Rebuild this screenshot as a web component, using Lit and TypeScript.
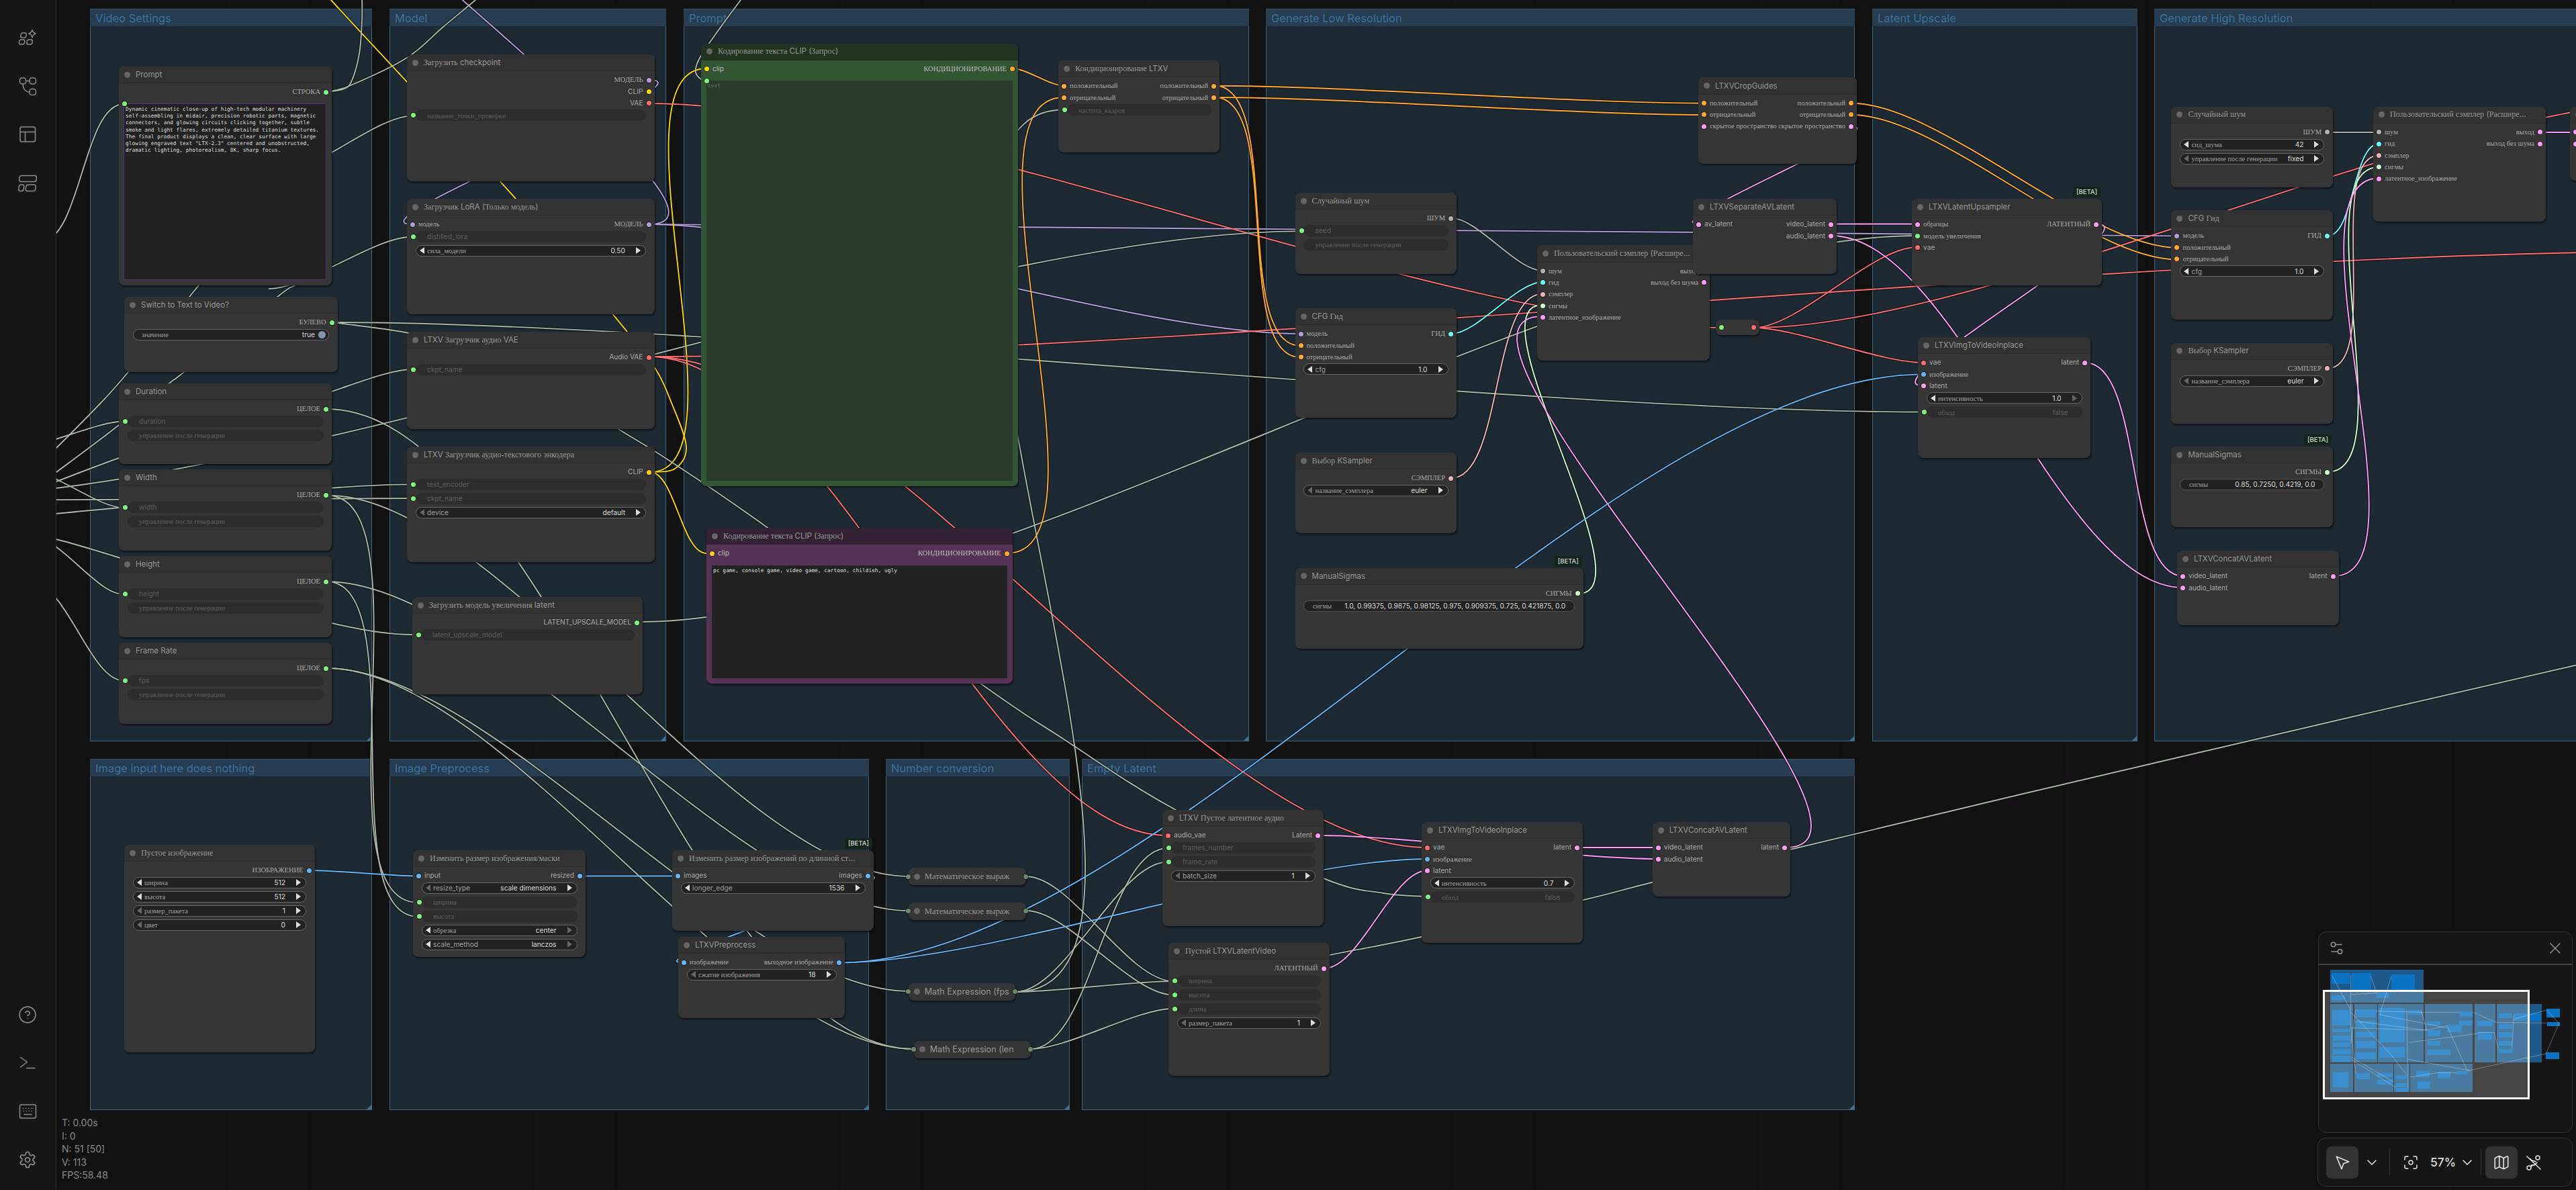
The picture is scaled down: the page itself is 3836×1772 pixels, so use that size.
import { LitElement, html, css, svg } from "lit";
import { customElement } from "lit/decorators.js";

const M = "#b39ddb", Y = "#ffd500", R = "#ff6e6e", O = "#ffa931", L = "#ff9cf9", I = "#64b5f6",
  P = "#7cf77c", N = "#b0b0b0", C = "#66ffff", S = "#ecb4b4", SI = "#cdffcd", G = "#a9b7a7";

type Row = any;
const s = (l?: string, lc?: string, r?: string, rc?: string): Row => ({ k: "s", l, lc, r, rc });
const w = (name: string, val: string, o: any = {}): Row => ({ k: "w", name, val, ...o });
const d = (name: string, port = true, val = ""): Row => ({ k: "d", name, val, port });
const m = (name: string, val: string): Row => ({ k: "m", name, val });

const AFTER = "управление после генерации";

const groups = [
  ["Video Settings", 134, 13, 554, 1104], ["Model", 580, 13, 992, 1104], ["Prompt", 1018, 13, 1860, 1104],
  ["Generate Low Resolution", 1885, 13, 2762, 1104], ["Latent Upscale", 2788, 13, 3183, 1104],
  ["Generate High Resolution", 3208, 13, 3900, 1104],
  ["Image input here does nothing", 134, 1130, 554, 1653], ["Image Preprocess", 580, 1130, 1294, 1653],
  ["Number conversion", 1319, 1130, 1593, 1653], ["Empty Latent", 1611, 1130, 2762, 1653],
] as [string, number, number, number, number][];

const nodes: any[] = [
  { b: [177, 99, 494, 425], t: "Prompt", r: [s("", "", "СТРОКА", P), { k: "ta", big: true, port: P, text: 'Dynamic cinematic close-up of high-tech modular machinery\nself-assembling in midair, precision robotic parts, magnetic\nconnectors, and glowing circuits clicking together, subtle\nsmoke and light flares, extremely detailed titanium textures.\nThe final product displays a clean, clear surface with large\nglowing engraved text "LTX-2.3" centered and unobstructed,\ndramatic lighting, photorealism, 8K, sharp focus.' }] },
  { b: [185, 442, 502.5, 554], t: "Switch to Text to Video?", r: [s("", "", "БУЛЕВО", P), { k: "tg", name: "значение", val: "true" }] },
  { b: [177, 571, 494, 691], t: "Duration", r: [s("", "", "ЦЕЛОЕ", P), d("duration"), d(AFTER, false)] },
  { b: [177, 699, 494, 820], t: "Width", r: [s("", "", "ЦЕЛОЕ", P), d("width"), d(AFTER, false)] },
  { b: [177, 828, 494, 949], t: "Height", r: [s("", "", "ЦЕЛОЕ", P), d("height"), d(AFTER, false)] },
  { b: [177, 957, 494, 1077.5], t: "Frame Rate", r: [s("", "", "ЦЕЛОЕ", P), d("fps"), d(AFTER, false)] },

  { b: [606, 81, 974.5, 270], t: "Загрузить checkpoint", r: [s("", "", "МОДЕЛЬ", M), s("", "", "CLIP", Y), s("", "", "VAE", R), d("название_точки_проверки")] },
  { b: [606, 296, 974.5, 468], t: "Загрузчик LoRA (Только модель)", r: [s("модель", M, "МОДЕЛЬ", M), d("distilled_lora"), w("сила_модели", "0.50", { dl: 0 })] },
  { b: [606, 494, 974.5, 639], t: "LTXV Загрузчик аудио VAE", r: [s("", "", "Audio VAE", R), d("ckpt_name")] },
  { b: [606, 665, 974.5, 837], t: "LTXV Загрузчик аудио-текстового энкодера", r: [s("", "", "CLIP", Y), d("text_encoder"), d("ckpt_name"), w("device", "default", { dl: 1 })] },
  { b: [614, 889, 957, 1034], t: "Загрузить модель увеличения latent", r: [s("", "", "LATENT_UPSCALE_MODEL", P), d("latent_upscale_model")] },

  { b: [1044, 64.5, 1516, 724], t: "Кодирование текста CLIP (Запрос)", v: "green", r: [s("clip", Y, "КОНДИЦИОНИРОВАНИЕ", O), { k: "ta", port: P, ph: "text", text: "" }] },
  { b: [1052, 786, 1507.5, 1017.5], t: "Кодирование текста CLIP (Запрос)", v: "purple", r: [s("clip", Y, "КОНДИЦИОНИРОВАНИЕ", O), { k: "ta", text: "pc game, console game, video game, cartoon, childish, ugly" }] },
  { b: [1576, 90, 1816, 226.7], t: "Кондиционирование LTXV", r: [s("положительный", O, "положительный", O), s("отрицательный", O, "отрицательный", O), d("частота_кадров")] },

  { b: [1928.5, 287, 2169, 407.5], t: "Случайный шум", r: [s("", "", "ШУМ", N), d("seed"), d(AFTER, false)] },
  { b: [1928.5, 459, 2169, 622], t: "CFG Гид", r: [s("модель", M, "ГИД", C), s("положительный", O), s("отрицательный", O), w("cfg", "1.0")] },
  { b: [1928.5, 674, 2169, 794], t: "Выбор KSampler", r: [s("", "", "СЭМПЛЕР", S), w("название_сэмплера", "euler", { dl: 1 })] },
  { b: [1928.5, 845.7, 2357.7, 966], t: "ManualSigmas", badge: 1, r: [s("", "", "СИГМЫ", SI), m("сигмы", "1.0, 0.99375, 0.9875, 0.98125, 0.975, 0.909375, 0.725, 0.421875, 0.0")] },
  { b: [2529, 115.4, 2765, 244], t: "LTXVCropGuides", r: [s("положительный", O, "положительный", O), s("отрицательный", O, "отрицательный", O), s("скрытое пространство", L, "скрытое пространство", L)] },
  { b: [2289, 365.4, 2546, 537], t: "Пользовательский сэмплер (Расшире...", r: [s("шум", N, "выход", L), s("гид", C, "выход без шума", L), s("сэмплер", S), s("сигмы", SI), s("латентное_изображение", L)] },
  { b: [2521, 296, 2735, 408], t: "LTXVSeparateAVLatent", r: [s("av_latent", L, "video_latent", L), s("", "", "audio_latent", L)] },

  { b: [2847, 296, 3130, 424.7], t: "LTXVLatentUpsampler", badge: 1, r: [s("образцы", L, "ЛАТЕНТНЫЙ", L), s("модель увеличения", P), s("vae", R)] },
  { b: [2856, 502, 3113, 682.4], t: "LTXVImgToVideoInplace", r: [s("vae", R, "latent", L), s("изображение", I), s("latent", L), w("интенсивность", "1.0", { dr: 1 }), d("обход", true, "false")] },
  { b: [3233.4, 158.8, 3474, 278.7], t: "Случайный шум", r: [s("", "", "ШУМ", N), w("сид_шума", "42"), w(AFTER, "fixed", { dl: 1 })] },
  { b: [3233.4, 313, 3474, 475.8], t: "CFG Гид", r: [s("модель", M, "ГИД", C), s("положительный", O), s("отрицательный", O), w("cfg", "1.0")] },
  { b: [3233.4, 510.8, 3474, 630.7], t: "Выбор KSampler", r: [s("", "", "СЭМПЛЕР", S), w("название_сэмплера", "euler", { dl: 1 })] },
  { b: [3233.4, 665, 3474, 785], t: "ManualSigmas", badge: 1, r: [s("", "", "СИГМЫ", SI), m("сигмы", "0.85, 0.7250, 0.4219, 0.0")] },
  { b: [3242, 820, 3482.5, 931], t: "LTXVConcatAVLatent", r: [s("video_latent", L, "latent", L), s("audio_latent", L)] },
  { b: [3534, 158.8, 3791, 330], t: "Пользовательский сэмплер (Расшире...", r: [s("шум", N, "выход", L), s("гид", C, "выход без шума", L), s("сэмплер", S), s("сигмы", SI), s("латентное_изображение", L)] },
  { b: [3827, 158.8, 4100, 269], t: "", r: [s("", L), s("", L)] },

  { b: [185, 1258, 468.5, 1567], t: "Пустое изображение", r: [s("", "", "ИЗОБРАЖЕНИЕ", I), w("ширина", "512"), w("высота", "512"), w("размер_пакета", "1", { dl: 1 }), w("цвет", "0", { dl: 1 })] },
  { b: [615, 1266, 872, 1425], t: "Изменить размер изображения/маски", r: [s("input", I, "resized", I), w("resize_type", "scale dimensions", { dl: 1 }), d("ширина"), d("высота"), w("обрезка", "center", { dr: 1 }), w("scale_method", "lanczos", { dr: 1 })] },
  { b: [1001, 1266, 1301, 1386], t: "Изменить размер изображений по длинной ст...", badge: 1, r: [s("images", I, "images", I), w("longer_edge", "1536")] },
  { b: [1010, 1395, 1258, 1516], t: "LTXVPreprocess", r: [s("изображение", I, "выходное изображение", I), w("сжатие изображения", "18", { dl: 1 })] },

  { b: [1731, 1206, 1971, 1378.6], t: "LTXV Пустое латентное аудио", r: [s("audio_vae", R, "Latent", L), d("frames_number"), d("frame_rate"), w("batch_size", "1", { dl: 1 })] },
  { b: [1740, 1404, 1979.5, 1601.5], t: "Пустой LTXVLatentVideo", r: [s("", "", "ЛАТЕНТНЫЙ", L), d("ширина"), d("высота"), d("длина"), w("размер_пакета", "1", { dl: 1 })] },
  { b: [2117, 1224, 2357, 1404], t: "LTXVImgToVideoInplace", r: [s("vae", R, "latent", L), s("изображение", I), s("latent", L), w("интенсивность", "0.7"), d("обход", true, "false")] },
  { b: [2460.7, 1224, 2666, 1335], t: "LTXVConcatAVLatent", r: [s("video_latent", L, "latent", L), s("audio_latent", L)] },
];

const collapsed: [number, number, number, string][] = [
  [1352.7, 1527.7, 1292.4, "Математическое выраж"], [1352.7, 1527.7, 1344, "Математическое выраж"],
  [1352.7, 1511.6, 1464, "Math Expression (fps"], [1360.7, 1534.8, 1550, "Math Expression (len"],
];

const sp = (x1: number, y1: number, x2: number, y2: number) => {
  const c = Math.hypot(x2 - x1, y2 - y1) * 0.25;
  return `M${x1} ${y1}C${x1 + c} ${y1} ${x2 - c} ${y2} ${x2} ${y2}`;
};
const pts = (a: number[][]) => {
  let p = `M${a[0][0]} ${a[0][1]}`;
  for (let i = 0; i < a.length - 1; i++) {
    const p0 = a[Math.max(i - 1, 0)], p1 = a[i], p2 = a[i + 1], p3 = a[Math.min(i + 2, a.length - 1)];
    p += `C${p1[0] + (p2[0] - p0[0]) / 6} ${p1[1] + (p2[1] - p0[1]) / 6} ${p2[0] - (p3[0] - p1[0]) / 6} ${p2[1] - (p3[1] - p1[1]) / 6} ${p2[0]} ${p2[1]}`;
  }
  return p;
};

const links: [string, string][] = [
  [sp(967, 119, 614, 334), M], [sp(966, 334, 450, -300), M], [sp(966, 334, 3242, 351.4), M], [sp(966, 334, 1936, 497), M],
  [sp(968, 703, 1052, 102), Y], [sp(968, 703, 1052, 824), Y],
  [pts([[968, 703], [1005, 698], [1022, 665], [1000, 600], [976, 549], [934, 494], [768, 296], [606, 122], [493, 0], [450, -50]]), Y],
  [sp(967, 154, 2563, 488), R], [sp(967, 531, 1738, 1244), R], [sp(967, 531, 2126, 1262), R], [sp(967, 531, 3960, 375), R],
  [sp(2611, 488, 2855, 368), R], [sp(2611, 488, 2864, 540), R], [sp(2611, 488, 3990, 150), R],
  [sp(60, 360, 184, 155), G],
  [pts([[486, 137], [510, 133], [523, 122], [535, 80], [539, 30], [539, -10]]), G],
  [pts([[486, 137], [520, 128], [606, 86], [660, 40], [708, 0], [730, -20]]), G],
  [pts([[60, 690], [84, 667], [150, 600], [191, 554], [282, 442], [296, 425], [320, 395]]), G],
  [pts([[60, 720], [84, 703], [177, 633], [253, 570], [274, 554], [413, 442], [439, 425], [470, 405]]), G],
  [pts([[60, 726], [84, 717], [177, 682], [300, 640]]), G],
  [sp(30, 665, 184, 627.5), G], [sp(40, 700, 184, 756), G], [sp(50, 800, 184, 885), G], [sp(50, 870, 184, 1013.6), G],
  [sp(-100, 745, 614, 742), G], [sp(-100, 775, 614, 721.4), G], [sp(-60, 780, 614, 945), G],
  [sp(420, 255, 614, 172.6), G], [sp(400, 430, 614, 352.5), G], [sp(420, 600, 614, 550), G],
  [sp(-100, 740, 1936, 344.4), G], [sp(494, 480, 2864, 613.5), G],
  [pts([[494, 480], [550, 487], [609, 496], [700, 515]]), G],
  [sp(486, 737.5, 1353, 1305), G], [sp(486, 866, 1353, 1356), G], [sp(486, 995, 1353, 1476), G], [sp(486, 995, 1361, 1562), G], [sp(486, 609, 1361, 1562), G],
  [sp(486, 737.5, 623, 1344), G], [sp(486, 866, 623, 1365), G],
  [sp(950, 926, 2855, 351), G],
  [pts([[860, 600], [921, 639], [1000, 688], [1142, 785], [1459, 1017], [1583, 1100], [1751, 1206], [1971, 1308], [2060, 1330], [2126, 1335]]), G],
  [pts([[1120, -20], [1103, 0], [1057, 63], [1040, 90], [1036, 108], [1044, 118], [1052, 120.7]]), G],
  [sp(1512, 1477, 1584, 163.5), G],
  [sp(1528, 1305, 1747, 1461), G], [sp(1528, 1356, 1747, 1481.5), G], [sp(1512, 1477, 1739, 1283.5), G], [sp(1512, 1477, 1747, 1461), G],
  [sp(1535, 1562, 1747, 1502), G], [sp(1535, 1562, 1739, 1263), G],
  [pts([[1900, 1440], [1981, 1422], [2117, 1395], [2358, 1340], [2460, 1314], [2666, 1265], [3000, 1185], [3500, 1068], [3860, 985]]), G],
  [sp(1508, 102, 1584, 127.7), O], [sp(1499, 824, 1584, 145), O], [sp(1809, 127.7, 1936, 514.7), O], [sp(1809, 145, 1936, 532), O],
  [sp(1809, 127.7, 2537, 153.7), O], [sp(1809, 145, 2537, 171), O], [sp(2757, 153.7, 3242, 368.6), O], [sp(2757, 171, 3242, 386.5), O],
  [sp(2161, 324.6, 2297, 403), N], [sp(2161, 497, 2297, 420), C], [sp(2161, 712, 2297, 437.5), S], [sp(2350, 884, 2297, 454), SI], [sp(2659, 1262, 2297, 471), L],
  [sp(3466, 197, 3543, 197), N], [sp(3466, 351.4, 3543, 214), C], [sp(3466, 548.5, 3543, 231.5), S], [sp(3466, 702.8, 3543, 248.7), SI],
  [sp(2727, 333.5, 2855, 333.5), L], [sp(2727, 351, 3251, 875), L], [sp(3122, 333.5, 2864, 574.6), L], [sp(3105, 540, 3251, 857.8), L],
  [sp(3475, 857.8, 3543, 265.3), L], [sp(3783, 197, 3840, 197), L], [sp(2757, 188, 2529, 333.5), L],
  [sp(1963, 1244, 2470, 1279), L], [sp(1972, 1442, 2126, 1296), L], [sp(2349, 1262, 2470, 1262), L],
  [sp(460, 1296, 623, 1304.5), I], [sp(864, 1304.5, 1009, 1304.5), I], [sp(1293, 1304.5, 1017, 1433.5), I],
  [sp(1250, 1433.5, 2126, 1279), I], [sp(1250, 1433.5, 2864, 557.4), I],
];

const mmGroups = [[148, 220, 565, 367], [148, 372, 250, 633], [255, 372, 358, 633], [362, 372, 566, 633], [571, 372, 785, 633], [792, 372, 887, 633], [892, 372, 1092, 633], [148, 640, 250, 765], [255, 640, 430, 765], [434, 640, 502, 765], [506, 640, 785, 765]];
const mmNodes = [[155, 235, 235, 282], [245, 235, 330, 310], [420, 240, 525, 310], [155, 335, 213, 355], [355, 322, 412, 345], [157, 400, 237, 470], [160, 483, 237, 500], [160, 515, 237, 537], [160, 545, 237, 566], [160, 575, 237, 597], [157, 605, 237, 630], [262, 398, 352, 432], [262, 447, 352, 482], [262, 495, 352, 522], [262, 537, 352, 570], [262, 590, 352, 620], [368, 392, 482, 543], [368, 565, 482, 612], [497, 400, 555, 422], [582, 450, 640, 470], [582, 490, 640, 518], [582, 538, 640, 560], [582, 578, 685, 600], [670, 465, 735, 498], [727, 405, 785, 430], [725, 448, 785, 468], [805, 448, 873, 472], [808, 498, 870, 532], [900, 416, 960, 436], [900, 462, 960, 485], [900, 500, 960, 524], [900, 538, 960, 558], [900, 575, 960, 593], [970, 416, 1090, 448], [1115, 395, 1175, 433], [1117, 455, 1175, 473], [1112, 590, 1170, 618], [160, 678, 228, 745], [265, 683, 325, 710], [357, 683, 428, 700], [357, 712, 428, 732], [440, 690, 490, 710], [440, 728, 490, 745], [443, 748, 495, 765], [533, 672, 592, 700], [537, 718, 595, 752], [628, 675, 685, 705], [710, 672, 760, 688]];
const mmLinks = ["155,245 240,400", "240,245 240,480 262,685", "240,410 420,600 490,690", "330,250 355,325", "420,250 370,420", "240,330 355,325", "240,480 580,490", "240,550 262,400", "240,610 430,720", "262,450 580,490", "352,405 560,410 730,410", "490,400 495,750", "555,405 580,490 670,470", "500,545 808,505", "365,420 670,480", "240,620 440,745", "670,470 760,670", "785,410 890,455", "805,500 880,500 900,575", "968,420 960,575", "970,440 1115,400 1170,460 1112,595", "760,672 1112,595", "890,455 1115,458", "495,620 770,670", "505,700 628,680 710,680"];

const ru = (str: string) => str.split(/([А-Яа-яЁё]+(?:[ _\-/]+[А-Яа-яЁё]+)*)/).map((p, i) => (i % 2 ? html`<span class="ru">${p}</span>` : p));

@customElement("app-root")
export class AppRoot extends LitElement {
  static styles = css`
    :host { display: block; position: relative; width: 3836px; height: 1772px; overflow: hidden; background: #121212; font-family: Inter, sans-serif; }
    .canvas { position: absolute; inset: 0; background-image: linear-gradient(90deg, rgba(255,255,255,.012) 1px, transparent 1px); background-size: 114px 100%; }
    .group { position: absolute; box-sizing: border-box; background: #1e2a33; border: 1px solid #3a6585; }
    .group header { height: 26px; padding-left: 8px; background: #263d52; color: #3f7199; font-size: 16.5px; line-height: 26px; white-space: nowrap; overflow: hidden; margin: -1px -1px 0 -1px; border-top: 1px solid #36586f; box-sizing: border-box; }
    .group::after { content: ""; position: absolute; right: 0; bottom: 0; border-left: 7px solid transparent; border-bottom: 7px solid #3d7099; }
    svg.links { position: absolute; left: 0; top: 0; overflow: visible; }
    .halo { fill: none; stroke: rgba(0, 0, 0, .55); stroke-width: 4; }
    .wire { fill: none; stroke-width: 1.9; }
    .ru { font-family: "Liberation Serif", serif; font-size: 1.03em; }
    .node { position: absolute; box-sizing: border-box; background: #353535; border-radius: 8px; box-shadow: 1px 2px 3px rgba(0,0,0,.55); color: #aaa; font-size: 10.2px; display: flex; flex-direction: column; }
    .title { flex: none; height: 25.4px; display: flex; align-items: center; gap: 8px; padding-left: 8px; box-sizing: border-box; background: #323232; border-bottom: 1px solid #2d2d2d; border-radius: 8px 8px 0 0; color: #989898; font-size: 11.5px; white-space: nowrap; overflow: hidden; }
    .title .ru { font-size: 1.06em; }
    .dot { flex: none; width: 9px; height: 9px; border-radius: 50%; background: #666; }
    .body { flex: 1; display: flex; flex-direction: column; padding-top: 4px; min-height: 0; }
    .slot { flex: none; position: relative; height: 17.3px; padding: 0 17px; display: flex; align-items: center; justify-content: space-between; white-space: nowrap; line-height: 17.3px; }
    .port { position: absolute; top: 50%; width: 7px; height: 7px; margin-top: -3.5px; border-radius: 50%; box-shadow: 0 0 0 1px rgba(0,0,0,.45); }
    .port.l { left: 5px; }
    .port.r { right: 5px; }
    .w { flex: none; position: relative; box-sizing: border-box; height: 17px; margin: 1.2px 12.5px 0; border-radius: 9px; display: flex; align-items: center; justify-content: space-between; white-space: nowrap; padding: 0 30px 0 16.5px; background: #222; border: 1px solid #666; }
    .w + .w { margin-top: 4px; }
    .w .val { color: #ddd; }
    .w .port.l { left: -7.5px; }
    .w .name { color: #a0a0a0; overflow: hidden; }
    .w.off { background: #2d2d2d; border-color: #2d2d2d; padding-right: 20px; }
    .w.off .name, .w.off .val { color: #5c5c5c; }
    .w.txt { padding: 0 13px; border-color: #505050; }
    .w.tg { padding: 0 20px 0 12.5px; }
    .knob { position: absolute; right: 4px; top: 50%; margin-top: -5.5px; width: 11px; height: 11px; border-radius: 50%; background: #8294af; }
    .ar { position: absolute; top: 50%; margin-top: -5px; width: 0; height: 0; border-top: 5px solid transparent; border-bottom: 5px solid transparent; }
    .ar.a { left: 5px; border-right: 7px solid #ddd; }
    .ar.b { right: 7px; border-left: 7px solid #ddd; }
    .ar.dim.a { border-right-color: #666; }
    .ar.dim.b { border-left-color: #666; }
    .ta { position: relative; flex: 1; margin: 3px 8px 8px; box-sizing: border-box; background: #222; color: #ddd; font-family: "DejaVu Sans Mono", monospace; font-size: 7.85px; line-height: 10.28px; padding: 3px 2px; white-space: pre; }
    .ta.big { margin: 8px 8px 8px 7px; border: 1px solid #5d2f78; }
    .ta .port.l { left: -3.5px; top: 0; }
    .ta .ph { color: #58705a; }
    .node.green { background: #335533; color: #bbb; }
    .node.green .title { background: #223322; border-bottom-color: #223322; }
    .node.green .ta { background: #2b3b2b; margin-top: 9px; }
    .node.purple { background: #553355; color: #bbb; }
    .node.purple .title { background: #332233; border-bottom-color: #332233; }
    .node.purple .ta { margin-top: 9px; }
    .badge { position: absolute; right: 2px; top: -18px; height: 16px; padding: 0 5px; background: #14261b; color: #e8e8e8; font-size: 9.6px; line-height: 16px; border-radius: 3px; }
    .col { position: absolute; height: 25.6px; box-sizing: border-box; background: #353535; border-radius: 8px; box-shadow: 1px 2px 3px rgba(0,0,0,.55); display: flex; align-items: center; gap: 7px; padding-left: 8px; color: #989898; font-size: 12.6px; white-space: nowrap; }
    .col .ru { font-size: 1em; }
    .col .port { background: #6b8a6b; }
    .col .port.l { left: -3.5px; }
    .col .port.r { right: -3.5px; }
    .reroute { position: absolute; left: 2555px; top: 476.4px; width: 65px; height: 23px; background: #353535; border-radius: 8px; box-shadow: 1px 2px 3px rgba(0,0,0,.55); }
    .reroute .port.l { left: 5px; }
    .reroute .port.r { right: 5px; }
    .side { position: absolute; left: 0; top: 0; width: 84px; height: 1772px; box-sizing: border-box; background: #171718; border-right: 1px solid #303033; display: flex; flex-direction: column; justify-content: space-between; align-items: center; padding: 20px 1px 9px 0; color: #8a8a8a; }
    .side section { display: flex; flex-direction: column; }
    .side .ic { width: 72px; height: 72px; display: flex; align-items: center; justify-content: center; }
    .side svg, .tool svg, .mmh svg { fill: none; stroke: currentColor; stroke-width: 1.5; stroke-linecap: round; stroke-linejoin: round; display: block; }
    .stats { position: absolute; left: 92px; top: 1662px; color: #878787; font-size: 14px; line-height: 19.5px; }
    .mm { position: absolute; left: 3452px; top: 1387px; width: 379px; height: 300px; box-sizing: border-box; background: #171718; border: 1px solid #333; border-radius: 12px; overflow: hidden; }
    .mmh { height: 49px; box-sizing: border-box; border-bottom: 2px solid #444; display: flex; align-items: center; justify-content: space-between; padding: 0 16px; color: #909090; }
    .mb { position: absolute; }
    .mb.g { background: #1d5a8a; }
    .mb.n { background: #0b73c3; }
    .mb.v { box-sizing: border-box; border: 3px solid #fff; background: rgba(255,255,255,.2); }
    svg.ml { position: absolute; left: 0; top: 0; width: 100%; height: 100%; }
    svg.ml path { fill: none; stroke: rgba(255,255,255,.3); stroke-width: 1; }
    .tool { position: absolute; left: 3451px; top: 1694px; width: 380px; height: 73px; box-sizing: border-box; background: #171718; border: 1px solid #333; border-radius: 12px; display: flex; align-items: center; padding-left: 12px; color: #e4e4e4; }
    .tool .btn { width: 48px; height: 48px; border-radius: 8px; display: flex; align-items: center; justify-content: center; flex: none; }
    .tool .btn.on { background: #333; }
    .tool .sep { width: 1px; height: 40px; background: #333; flex: none; }
    .tool .pc { font-size: 17.5px; font-weight: 500; color: #dcdcdc; }
    .tool .chev { flex: none; }
    .tool .chev.c1 { margin: 0 18px 0 12px; }
    .tool .ic1 { margin: 0 17px 0 19px; flex: none; }
    .tool .chev.c2 { margin: 0 12px 0 9px; }
    .tool .ic2 { margin: 0 0 0 12px; }
    .tool .sep2 { margin-right: 6px; }
  `;

  private widget(r: any) {
    if (r.k === "d")
      return html`<div class="w off">${r.port ? html`<i class="port l" style="background:${P}"></i>` : ""}<span class="name">${ru(r.name)}</span><span class="val">${r.val}</span></div>`;
    if (r.k === "m")
      return html`<div class="w txt"><span class="name">${ru(r.name)}</span><span class="val">${r.val}</span></div>`;
    if (r.k === "tg")
      return html`<div class="w tg"><span class="name">${ru(r.name)}</span><span class="val">${r.val}</span><i class="knob"></i></div>`;
    return html`<div class="w"><i class="ar a ${r.dl ? "dim" : ""}"></i><span class="name">${ru(r.name)}</span><span class="val">${r.val}</span><i class="ar b ${r.dr ? "dim" : ""}"></i></div>`;
  }

  private row(r: any) {
    if (r.k === "s")
      return html`<div class="slot">
        ${r.lc ? html`<i class="port l" style="background:${r.lc}"></i>` : ""}<span>${ru(r.l || "")}</span>
        <span>${ru(r.r || "")}</span>${r.rc ? html`<i class="port r" style="background:${r.rc}"></i>` : ""}
      </div>`;
    if (r.k === "ta")
      return html`<div class="ta ${r.big ? "big" : ""}">${r.port ? html`<i class="port l" style="background:${r.port}"></i>` : ""}${r.ph ? html`<span class="ph">${r.ph}</span>` : r.text}</div>`;
    return this.widget(r);
  }

  private node(n: any) {
    const [x1, y1, x2, y2] = n.b;
    return html`<div class="node ${n.v || ""}" style="left:${x1}px;top:${y1}px;width:${x2 - x1}px;height:${y2 - y1}px">
      ${n.badge ? html`<div class="badge">[BETA]</div>` : ""}
      <div class="title"><i class="dot"></i><span>${ru(n.t)}</span></div>
      <div class="body">${n.r.map((r: any) => this.row(r))}</div>
    </div>`;
  }

  render() {
    const mx = (v: number) => (v - 97) / 3, my = (v: number) => (v - 52) / 3;
    const box = (b: number[]) => `left:${mx(b[0])}px;top:${my(b[1])}px;width:${(b[2] - b[0]) / 3}px;height:${(b[3] - b[1]) / 3}px`;
    return html`
      <div class="canvas">
        ${groups.map(([t, x1, y1, x2, y2]) => html`<div class="group" style="left:${x1}px;top:${y1}px;width:${x2 - x1}px;height:${y2 - y1}px"><header>${t}</header></div>`)}
        <svg class="links" width="3836" height="1772">
          ${links.map(([d_]) => svg`<path class="halo" d=${d_}></path>`)}
          ${links.map(([d_, c]) => svg`<path class="wire" d=${d_} stroke=${c}></path>`)}
        </svg>
        ${nodes.map((n) => this.node(n))}
        ${collapsed.map(([x1, x2, y, t]) => html`<div class="col" style="left:${x1}px;width:${x2 - x1}px;top:${y}px"><i class="port l"></i><i class="dot"></i><span>${ru(t)}</span><i class="port r"></i></div>`)}
        <div class="reroute"><i class="port l" style="background:${P}"></i><i class="port r" style="background:${R}"></i></div>
      </div>

      <aside class="side">
        <section>
          <div class="ic"><svg width="28" height="28" viewBox="0 0 28 28"><rect x="3.500" y="7" width="8" height="7" rx="2.600" transform="skewX(-8) translate(2 0)"></rect><rect x="1.500" y="17" width="8" height="7" rx="2.600" transform="skewX(-8) translate(3 0)"></rect><rect x="13" y="17" width="8" height="7" rx="2.600" transform="skewX(-8) translate(3 0)"></rect><path d="M21 2.500C21.600 5.500 22.500 6.600 26 8C22.500 9.400 21.600 10.500 21 14C20.400 10.500 19.500 9.400 16 8C19.500 6.600 20.400 5.500 21 2.500Z"></path></svg></div>
          <div class="ic"><svg width="28" height="28" viewBox="0 0 28 28"><rect x="2.500" y="2" width="9" height="9" rx="3.500"></rect><rect x="17" y="2" width="9.500" height="9" rx="3.500"></rect><rect x="17" y="18.500" width="9.500" height="9" rx="3.500"></rect><path d="M11.500 6.500H17M7 11C7 18 11 23 17 23"></path></svg></div>
          <div class="ic"><svg width="28" height="28" viewBox="0 0 28 28"><rect x="3" y="3" width="22.500" height="22" rx="2.500"></rect><path d="M3 10.500H25.500M10.500 10.500V25"></path></svg></div>
          <div class="ic"><svg width="28" height="28" viewBox="0 0 28 28"><rect x="1.500" y="3.500" width="25.500" height="9" rx="3" transform="skewX(-4) translate(.8 0)"></rect><rect x="1.500" y="17" width="7.500" height="9.500" rx="3" transform="skewX(-6) translate(1.800 0)"></rect><rect x="12" y="17" width="14.500" height="9.500" rx="3" transform="skewX(-6) translate(1.800 0)"></rect></svg></div>
        </section>
        <section>
          <div class="ic"><svg width="26" height="26" viewBox="0 0 24 24"><circle cx="12" cy="12" r="11"></circle><path d="M9 9.100a3 3 0 0 1 5.800 1c0 2-3 3-3 3M12 17.300h.01"></path></svg></div>
          <div class="ic"><svg width="24" height="24" viewBox="0 0 24 24"><path d="M1.500 3.500L11.500 10.500L1.500 18M10.500 19.500H23"></path></svg></div>
          <div class="ic"><svg width="27" height="27" viewBox="0 0 27 27"><rect x="1.500" y="3" width="24" height="20" rx="2.500"></rect><path d="M6.500 8.500h.01M10.500 8.500h.01M14.500 8.500h.01M18.500 8.500h.01M21 8.500h.01M7 12.500h.01M11 12.500h.01M15 12.500h.01M19 12.500h.01M8 17.500H19"></path></svg></div>
          <div class="ic"><svg width="28" height="28" viewBox="0 0 24 24"><path d="M12.220 2h-.44a2 2 0 0 0-2 2v.18a2 2 0 0 1-1 1.730l-.43.25a2 2 0 0 1-2 0l-.15-.08a2 2 0 0 0-2.730.73l-.22.38a2 2 0 0 0 .73 2.730l.15.1a2 2 0 0 1 1 1.720v.51a2 2 0 0 1-1 1.740l-.15.09a2 2 0 0 0-.73 2.730l.22.38a2 2 0 0 0 2.730.73l.15-.08a2 2 0 0 1 2 0l.43.25a2 2 0 0 1 1 1.730V20a2 2 0 0 0 2 2h.44a2 2 0 0 0 2-2v-.18a2 2 0 0 1 1-1.730l.43-.25a2 2 0 0 1 2 0l.15.08a2 2 0 0 0 2.730-.73l.22-.39a2 2 0 0 0-.73-2.730l-.15-.08a2 2 0 0 1-1-1.740v-.5a2 2 0 0 1 1-1.740l.15-.09a2 2 0 0 0 .73-2.730l-.22-.38a2 2 0 0 0-2.730-.73l-.15.08a2 2 0 0 1-2 0l-.43-.25a2 2 0 0 1-1-1.730V4a2 2 0 0 0-2-2z"></path><circle cx="12" cy="12" r="3"></circle></svg></div>
        </section>
      </aside>

      <div class="stats">T: 0.00s<br />I: 0<br />N: 51 [50]<br />V: 113<br />FPS:58.48</div>

      <div class="mm">
        <div class="mmh">
          <svg width="22" height="22" viewBox="0 0 22 22"><circle cx="5.500" cy="5.500" r="3.200"></circle><path d="M8.700 5.500H18"></path><circle cx="15.500" cy="16" r="3.200"></circle><path d="M12.300 16H3"></path></svg>
          <svg width="18" height="18" viewBox="0 0 18 18"><path d="M2 2L16 16M16 2L2 16"></path></svg>
        </div>
        ${mmGroups.map((b) => html`<div class="mb g" style=${box(b)}></div>`)}
        ${mmNodes.map((b) => html`<div class="mb n" style=${box(b)}></div>`)}
        <svg class="ml">${mmLinks.map((l) => svg`<path d=${"M" + l.split(" ").map((p) => { const [a, b] = p.split(",").map(Number); return mx(a) + " " + my(b); }).join("L")}></path>`)}</svg>
        <div class="mb v" style=${box([115, 310, 1040, 798])}></div>
      </div>

      <div class="tool">
        <div class="btn on"><svg width="26" height="26" viewBox="0 0 24 24"><path d="M4 4l7.070 17 2.510-7.390L21 11.070z"></path></svg></div>
        <svg class="chev c1" width="16" height="16" viewBox="0 0 16 16"><path d="M2 5l6 6 6-6"></path></svg>
        <div class="sep"></div>
        <svg class="ic1" width="24" height="24" viewBox="0 0 24 24"><path d="M3 8V5a2 2 0 0 1 2-2h3M16 3h3a2 2 0 0 1 2 2v3M21 16v3a2 2 0 0 1-2 2h-3M8 21H5a2 2 0 0 1-2-2v-3"></path><circle cx="12" cy="12" r="3"></circle></svg>
        <span class="pc">57%</span>
        <svg class="chev c2" width="16" height="16" viewBox="0 0 16 16"><path d="M2 5l6 6 6-6"></path></svg>
        <div class="sep sep2"></div>
        <div class="btn on"><svg width="26" height="26" viewBox="0 0 24 24"><path d="M14.106 5.553a2 2 0 0 0 1.788 0l3.659-1.830A1 1 0 0 1 21 4.619v12.764a1 1 0 0 1-.553.894l-4.553 2.277a2 2 0 0 1-1.788 0l-4.212-2.106a2 2 0 0 0-1.788 0l-3.659 1.830A1 1 0 0 1 3 19.381V6.618a1 1 0 0 1 .553-.894l4.553-2.277a2 2 0 0 1 1.788 0zM15 5.764v15M9 3.236v15"></path></svg></div>
        <svg class="ic2" width="24" height="24" viewBox="0 0 24 24"><circle cx="18" cy="5" r="3"></circle><circle cx="5" cy="20" r="3"></circle><path d="M2 3l20 19M7.500 18L12 15.500M15 11l-2-1-4-1-2-2.500M8 16l5 0 4-4"></path></svg>
      </div>
    `;
  }
}
